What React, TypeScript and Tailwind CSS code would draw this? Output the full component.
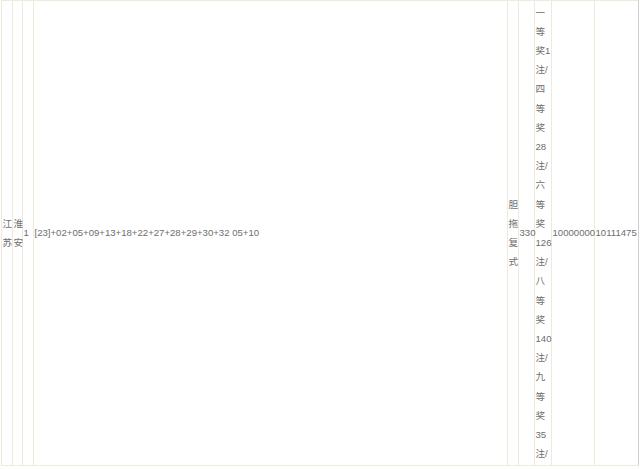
const cell =
  "border border-[#ecebdc] px-[0.5px] py-[1.6px] align-middle text-left";

export default function App() {
  return (
    <div className="min-h-[469px] w-[640px] overflow-hidden bg-white">
      <table
        className="ml-px table-fixed border-collapse text-[9.6px] leading-[19.2px] text-[#6e6e6e]"
        style={{ fontFamily: '"Liberation Sans", "Noto Sans CJK SC", sans-serif', width: 637 }}
      >
        <colgroup>
          <col className="w-[11px]" />
          <col className="w-[10px]" />
          <col className="w-[11px]" />
          <col className="w-[474px]" />
          <col className="w-[11px]" />
          <col className="w-[16px]" />
          <col className="w-[17px]" />
          <col className="w-[43px]" />
          <col className="w-[44px]" />
        </colgroup>
        <tbody>
          <tr>
            <td className={cell}>江苏</td>
            <td className={cell}>淮安</td>
            <td className={cell}>1</td>
            <td className={cell}>[23]+02+05+09+13+18+22+27+28+29+30+32 05+10</td>
            <td className={cell}>胆拖复式</td>
            <td className={cell}>330</td>
            <td className={cell}>一等奖1注/四等奖28注/六等奖126注/八等奖140注/九等奖35注/</td>
            <td className={cell}>10000000</td>
            <td className={`${cell} border-r-[#cfcfcf]`}>10111475</td>
          </tr>
        </tbody>
      </table>
    </div>
  );
}
